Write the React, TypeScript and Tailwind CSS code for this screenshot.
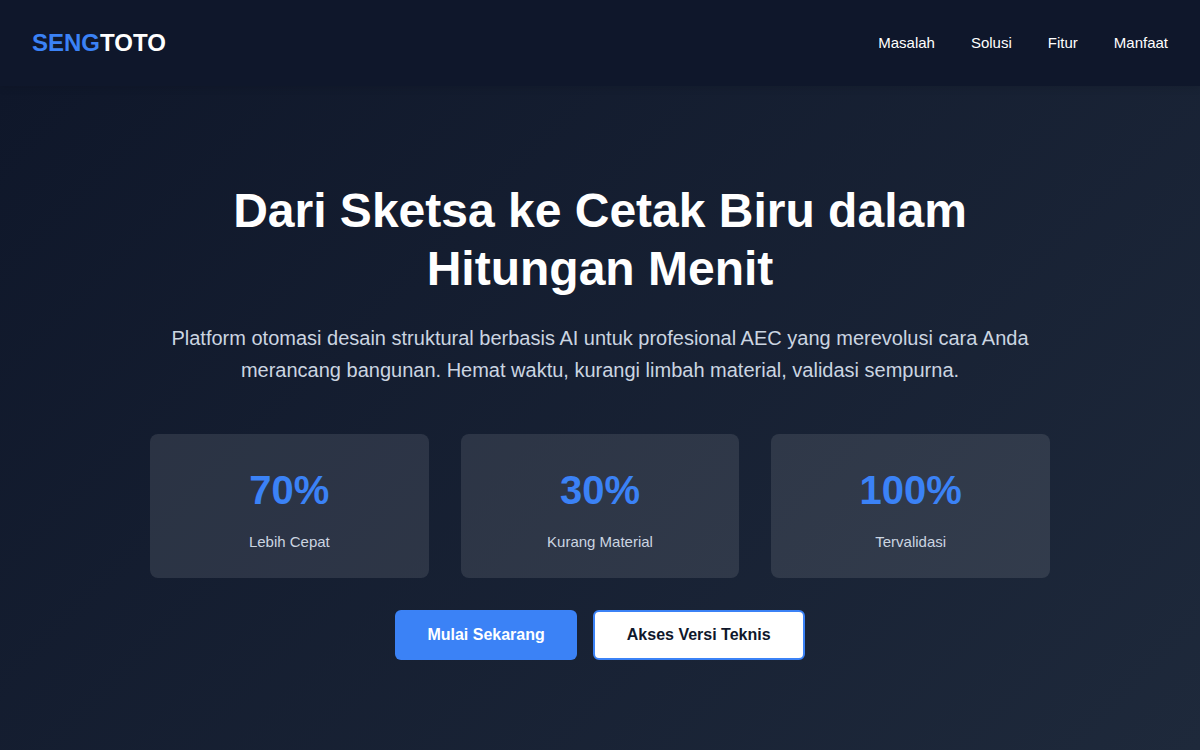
const links = [
  { label: "Masalah", href: "#masalah" },
  { label: "Solusi", href: "#solusi" },
  { label: "Fitur", href: "#fitur" },
  { label: "Manfaat", href: "#manfaat" },
];

const stats = [
  { value: "70%", label: "Lebih Cepat" },
  { value: "30%", label: "Kurang Material" },
  { value: "100%", label: "Tervalidasi" },
];

function Header() {
  return (
    <header className="sticky top-0 z-10 flex items-center justify-between bg-slate-900 px-8 py-6 shadow-[0_2px_8px_rgba(0,0,0,0.1)]">
      <a href="#" className="text-2xl leading-[38px] font-bold text-white">
        <span className="text-[#3b82f6]">SENG</span>TOTO
      </a>
      <nav>
        <ul className="flex gap-9">
          {links.map((link) => (
            <li key={link.href}>
              <a href={link.href} className="text-[15px] leading-6 text-white">
                {link.label}
              </a>
            </li>
          ))}
        </ul>
      </nav>
    </header>
  );
}

function Hero() {
  return (
    <section className="flex grow justify-center bg-[linear-gradient(135deg,#0f172a_0%,#1e293b_100%)] px-8 pt-24 pb-20 text-center">
      <div className="w-full max-w-[900px]">
        <h1 className="mb-6 text-5xl leading-[58px] font-bold text-white">
          Dari Sketsa ke Cetak Biru dalam Hitungan Menit
        </h1>
        <p className="mb-12 text-xl leading-8 text-[#cbd5e1]">
          Platform otomasi desain struktural berbasis AI untuk profesional AEC yang merevolusi cara Anda
          merancang bangunan. Hemat waktu, kurangi limbah material, validasi sempurna.
        </p>
        <div className="mb-8 grid grid-cols-1 gap-8 sm:grid-cols-3">
          {stats.map((stat) => (
            <div key={stat.label} className="rounded-lg bg-[rgba(255,255,255,0.1)] p-6">
              <div className="mb-2 text-[40px] leading-[64px] font-bold text-[#3b82f6]">{stat.value}</div>
              <div className="text-[15px] leading-6 text-[#cbd5e1]">{stat.label}</div>
            </div>
          ))}
        </div>
        <div className="flex flex-wrap justify-center gap-4">
          <button type="button" className="h-[50px] cursor-pointer rounded-md bg-[#3b82f6] px-8 text-base font-bold text-white">
            Mulai Sekarang
          </button>
          <button
            type="button"
            className="h-[50px] cursor-pointer rounded-md border-2 border-[#3b82f6] bg-white px-8 text-base font-bold text-slate-900"
          >
            Akses Versi Teknis
          </button>
        </div>
      </div>
    </section>
  );
}

export default function App() {
  return (
    <div className="flex min-h-screen flex-col bg-slate-900 font-['Liberation_Sans',Arial,sans-serif]">
      <Header />
      <Hero />
    </div>
  );
}
